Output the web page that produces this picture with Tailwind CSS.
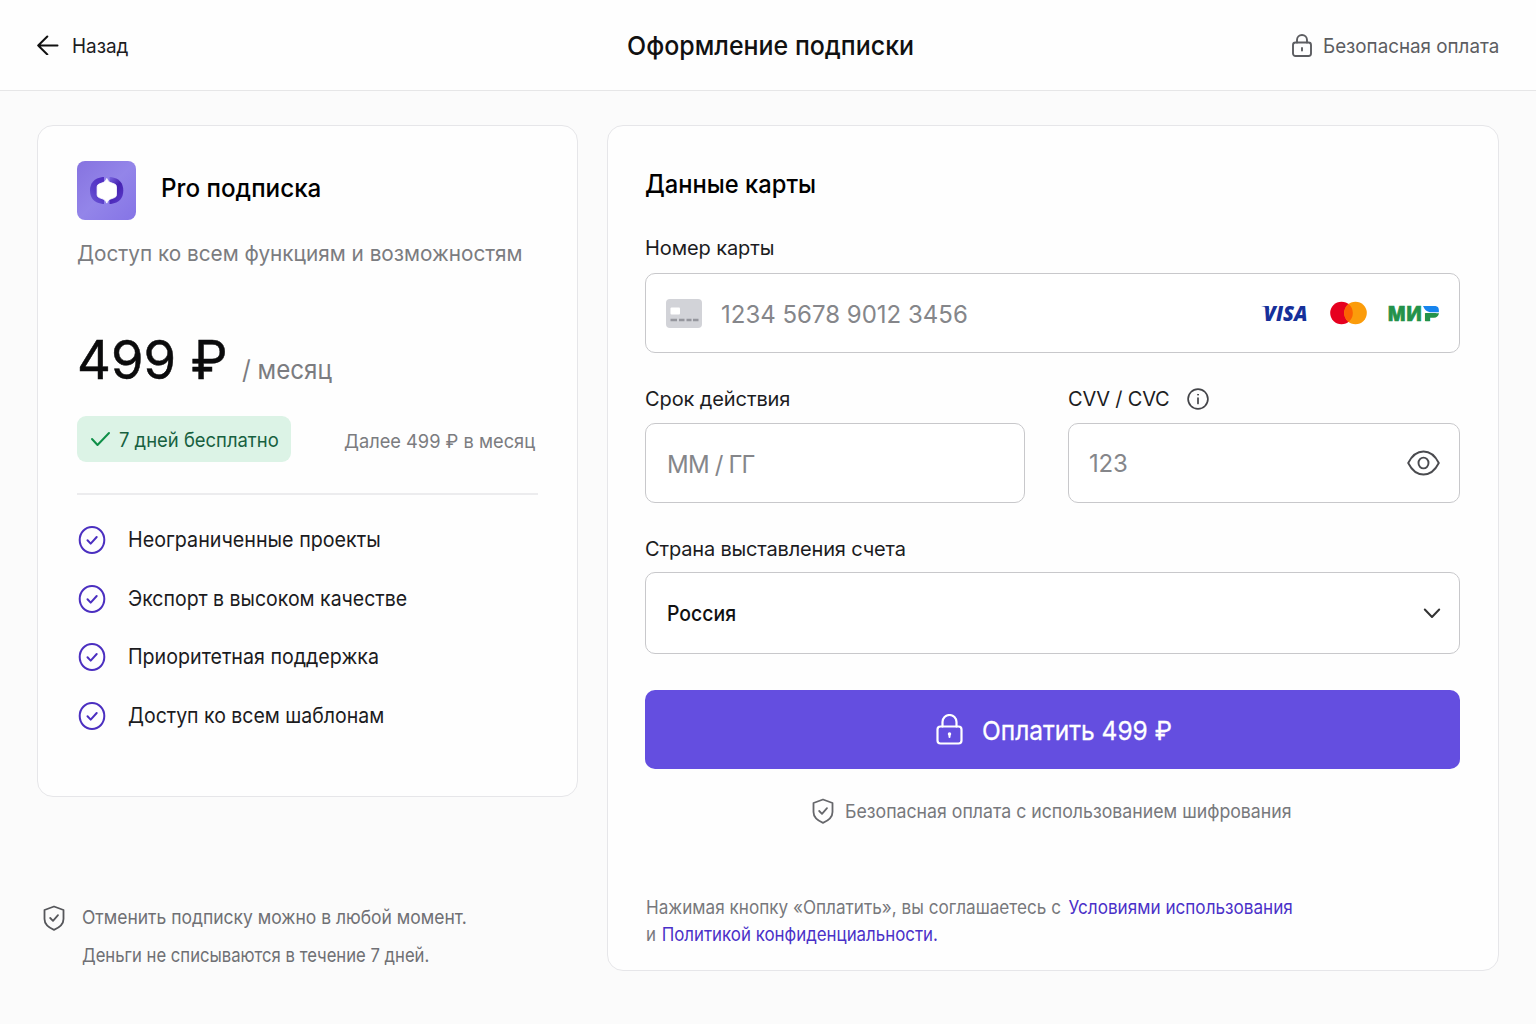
<!DOCTYPE html>
<html lang="ru">

<head>
    <meta charset="UTF-8">
    <meta name="viewport" content="width=device-width, initial-scale=1.0">
    <script src="https://cdn.jsdelivr.net/npm/@tailwindcss/browser@4"></script>
    <title>Оформление подписки</title>
</head>

<body class="bg-[#fbfbfb] font-['Inter','Liberation_Sans',sans-serif] text-[#1c1c1e] h-[1024px] overflow-hidden whitespace-nowrap">
    <header class="grid grid-cols-3 items-center h-[91px] px-[37px] bg-[#fefefe] border-b border-[#e6e6e7]">
        <a href="#" class="flex items-center gap-[13px] text-[20px]">
            <svg class="w-[22px] h-[20px]" viewBox="0 0 22 20" fill="none" stroke="#111" stroke-width="2" stroke-linecap="round" stroke-linejoin="round"><path d="M20.500 10.500H1.200M10.300 1.500 1.200 10.500l9.100 9"/></svg>
            <span class="pt-px origin-left scale-x-[.945]">Назад</span>
        </a>
        <h1 class="pt-px pl-[6px] text-center text-[26px] font-medium text-[#111] scale-x-[.96]">Оформление подписки</h1>
        <div class="flex items-center justify-end gap-[11px] text-[20px] text-[#5c5d61]">
            <svg class="w-5 h-[23px]" viewBox="0 0 20 23" fill="none" stroke="currentColor" stroke-width="1.900" stroke-linecap="round"><rect x="1" y="8.500" width="18" height="13.500" rx="2.500"/><path d="M5 8.500V6a5 5 0 0 1 10 0v2.500M10 14v2.500"/></svg>
            <span class="w-[176px] pt-px origin-left scale-x-[.939]">Безопасная оплата</span>
        </div>
    </header>

    <main class="flex items-start gap-[29px] pt-[34px] pl-[37px] pr-[37px]">
        <div class="w-[541px]">
            <!-- План -->
            <section class="h-[672px] px-[39px] pt-[35px] bg-[#fefefe] border border-[#e6e6e9] rounded-2xl">
                <div class="flex items-center gap-[25px]">
                    <svg class="w-[59px] h-[59px]" viewBox="0 0 59 59">
                        <defs>
                            <linearGradient id="tile" x1="0" y1="0" x2="1" y2="1"><stop offset="0" stop-color="#8673e0"/><stop offset=".5" stop-color="#9385e9"/><stop offset="1" stop-color="#8574e6"/></linearGradient>
                            <linearGradient id="left" x1="0" y1="1" x2=".6" y2="0"><stop offset="0" stop-color="#6f5ad8"/><stop offset=".5" stop-color="#5a3fca"/><stop offset="1" stop-color="#5230c4"/></linearGradient>
                            <linearGradient id="right" x1="0" y1="0" x2=".6" y2="1"><stop offset="0" stop-color="#7a66e0"/><stop offset=".5" stop-color="#4521b0"/><stop offset="1" stop-color="#5737c6"/></linearGradient>
                        </defs>
                        <rect width="59" height="59" rx="8" fill="url(#tile)"/>
                        <path d="M27 16h-1.500Q13 18 13 29.500T25.500 43H27z" fill="url(#left)"/>
                        <path d="M32.500 16H34q12.300 2 12.300 13.500T34 43h-1.500z" fill="url(#right)"/>
                        <path d="M29.800 17.500c.9 2.200 2.200 3.600 3.900 4.100l3.800 1.400q2 .8 2 2.800v8q0 2-2 2.800l-3.800 1.400c-1.700.5-3 1.900-3.900 4.100-.9-2.200-2.200-3.600-3.900-4.100l-3.800-1.400q-2-.8-2-2.800v-8q0-2 2-2.800l3.800-1.400c1.700-.5 3-1.900 3.900-4.100z" fill="#fff" stroke="#fff" stroke-width=".8" stroke-linejoin="round"/>
                    </svg>
                    <h2 class="pb-1 text-[25.5px] font-medium text-black origin-left scale-x-[.95]">Pro подписка</h2>
                </div>
                <p class="mt-[17px] text-[22px] leading-8 text-[#7b7c80] origin-left scale-x-[.943]">Доступ ко всем функциям и возможностям</p>
                <div class="flex items-baseline gap-[18px] mt-[56px] h-[71px]">
                    <span class="w-[147px] text-[53px] leading-[70px] font-normal text-[#0b0b0c] [-webkit-text-stroke:.5px_#0b0b0c] origin-left scale-x-[.99]">499 ₽</span>
                    <span class="text-[26px] leading-[30px] text-[#7b7c80] origin-left scale-x-[.93]">/ месяц</span>
                </div>
                <div class="flex items-center justify-between mt-[20px] pr-[3px]">
                    <span class="flex items-center gap-2 w-[214px] h-[46px] pl-[13px] bg-[#dcf3e6] rounded-[9px] text-[19.500px] text-[#17603f]">
                        <svg class="w-[21px] h-[16px] shrink-0" viewBox="0 0 21 16" fill="none" stroke="#0f8f48" stroke-width="2" stroke-linecap="round" stroke-linejoin="round"><path d="m2 8 5.500 6L19 2"/></svg>
                        <span class="pt-[3px] origin-left scale-x-[.945]">7 дней бесплатно</span>
                    </span>
                    <span class="w-[191px] pt-[6px] text-[19px] text-[#7b7c80] origin-left scale-x-[.96]">Далее 499 ₽ в месяц</span>
                </div>
                <ul class="flex flex-col mt-[31px] pt-[16px] border-t-2 border-[#ececee] text-[21.3px]">
                    <li class="flex items-center gap-[22px] h-[58.5px]">
                        <svg class="w-[28px] h-[28px] ml-px" viewBox="0 0 28 28" fill="none" stroke="#4b2fc0" stroke-width="2" stroke-linecap="round" stroke-linejoin="round"><ellipse cx="14" cy="14" rx="12.300" ry="13"/><path d="m9.500 14.300 3.200 3.300 6-6.600"/></svg>
                        <span class="origin-left scale-x-[.925]">Неограниченные проекты</span>
                    </li>
                    <li class="flex items-center gap-[22px] h-[58.5px]">
                        <svg class="w-[28px] h-[28px] ml-px" viewBox="0 0 28 28" fill="none" stroke="#4b2fc0" stroke-width="2" stroke-linecap="round" stroke-linejoin="round"><ellipse cx="14" cy="14" rx="12.300" ry="13"/><path d="m9.500 14.300 3.200 3.300 6-6.600"/></svg>
                        <span class="origin-left scale-x-[.915]">Экспорт в высоком качестве</span>
                    </li>
                    <li class="flex items-center gap-[22px] h-[58.5px]">
                        <svg class="w-[28px] h-[28px] ml-px" viewBox="0 0 28 28" fill="none" stroke="#4b2fc0" stroke-width="2" stroke-linecap="round" stroke-linejoin="round"><ellipse cx="14" cy="14" rx="12.300" ry="13"/><path d="m9.500 14.300 3.200 3.300 6-6.600"/></svg>
                        <span class="origin-left scale-x-[.922]">Приоритетная поддержка</span>
                    </li>
                    <li class="flex items-center gap-[22px] h-[58.5px]">
                        <svg class="w-[28px] h-[28px] ml-px" viewBox="0 0 28 28" fill="none" stroke="#4b2fc0" stroke-width="2" stroke-linecap="round" stroke-linejoin="round"><ellipse cx="14" cy="14" rx="12.300" ry="13"/><path d="m9.500 14.300 3.200 3.300 6-6.600"/></svg>
                        <span class="origin-left scale-x-[.915]">Доступ ко всем шаблонам</span>
                    </li>
                </ul>
            </section>

            <div class="flex gap-[17px] mt-[102px] pl-[6px] text-[19px] leading-[37.5px] text-[#6f7074]">
                <svg class="w-[22px] h-[26px] mt-[6px]" viewBox="0 0 22 26" fill="none" stroke="#55565a" stroke-width="1.800" stroke-linecap="round" stroke-linejoin="round"><path d="M11 1.500 20.500 5v9c0 5-4 8.500-9.500 10.800C5.500 22.500 1.500 19 1.500 14V5z"/><path d="m7.200 13 2.800 2.800 5-5.600"/></svg>
                <div>
                    <p class="origin-left scale-x-[.92]">Отменить подписку можно в любой момент.</p>
                    <p class="origin-left scale-x-[.877]">Деньги не списываются в течение 7 дней.</p>
                </div>
            </div>
        </div>

        <!-- Оплата -->
        <form class="flex-1 min-w-0 h-[846px] pl-[37px] pr-[38px] bg-[#fefefe] border border-[#e6e6e9] rounded-2xl">
            <h2 class="mt-[41px] text-[25.5px] leading-[34px] font-medium text-black origin-left scale-x-[.93]">Данные карты</h2>
            <label class="block mt-[34px] h-[27px] text-[20px] leading-[27px] tracking-[-0.1px]">Номер карты</label>
            <div class="flex items-center mt-[11px] h-[80px] px-[20px] bg-white border border-[#c8c8cb] rounded-[10px]">
                <svg class="w-[36px] h-[29px]" viewBox="0 0 36 29"><rect width="36" height="29" rx="4" fill="#d2d3d8"/><rect x="4.500" y="8.500" width="9.500" height="7" rx="1" fill="#fff"/><path d="M4.500 21h6.500M13 21h5.500M20.500 21h5M27 21h5.500" stroke="#95969d" stroke-width="2.600"/></svg>
                <input class="flex-1 ml-[19px] pt-[3px] min-w-0 text-[24px] outline-none placeholder:text-[#85868a]" placeholder="1234 5678 9012 3456">
                <svg class="w-[182px] h-[40px] shrink-0" viewBox="-1 -7.5 182 40">
                    <text x="5.500" y="20.300" font-family="Open Sans" font-weight="800" font-style="italic" font-size="20.500" fill="#16309a" textLength="44" lengthAdjust="spacingAndGlyphs">VISA</text>
                    <path d="M3 5.700h7l1.500 4C9.500 7.200 6 6.200 3 5.700z" fill="#16309a"/>
                    <circle cx="83.500" cy="12.500" r="11.300" fill="#e6001f"/><circle cx="97.500" cy="12.500" r="11.300" fill="#fb9c0b"/>
                    <path d="M90.500 3.600a11.300 11.300 0 0 1 0 17.800a11.300 11.300 0 0 1 0-17.800z" fill="#fb6203"/>
                    <text y="20.300" font-family="Open Sans" font-weight="800" font-size="20.500" fill="#23924a" stroke="#23924a" stroke-width=".7"><tspan x="129.500" textLength="34.500" lengthAdjust="spacingAndGlyphs">МИ</tspan><tspan x="166">Р</tspan></text>
                    <path d="M165.500 4.500h17v8h-17z" fill="#fff"/>
                    <path d="M167 12.800H181q-1 4.400-5 4.400h-4v3.400h-5z" fill="#23924a"/>
                    <path d="M165 5.600h12.500q4 .5 3.300 6.200H172q-4.500-.5-7-6.200z" fill="#1684ee"/>
                </svg>
            </div>
            <div class="flex gap-[43px] mt-[32px]">
                <div class="w-[380px] shrink-0">
                    <label class="block h-[27px] text-[20px] leading-[28px] tracking-[-0.1px]">Срок действия</label>
                    <input class="block w-full mt-[11px] h-[80px] px-[21px] pt-[2px] bg-white border border-[#c8c8cb] rounded-[10px] text-[24px] tracking-[-0.8px] outline-none placeholder:text-[#85868a]" placeholder="ММ / ГГ">
                </div>
                <div class="flex-1 min-w-0">
                    <label class="flex items-center gap-[17px] h-[27px] text-[20px] leading-[28px] tracking-[-0.2px]">
                        CVV / CVC
                        <svg class="w-[22px] h-[22px]" viewBox="0 0 22 22" fill="none" stroke="#444549" stroke-width="1.700" stroke-linecap="round"><circle cx="11" cy="11" r="9.900"/><path d="M11 10v5.500"/><circle cx="11" cy="6.700" r=".5" fill="#444549" stroke-width="1"/></svg>
                    </label>
                    <div class="flex items-center mt-[11px] h-[80px] px-[19px] bg-white border border-[#c8c8cb] rounded-[10px]">
                        <input class="flex-1 pt-[2px] pl-px min-w-0 text-[24px] tracking-[-0.2px] outline-none placeholder:text-[#85868a]" placeholder="123">
                        <svg class="w-[33px] h-[26px]" viewBox="0 0 33 26" fill="none" stroke="#4a4b4f" stroke-width="1.900" stroke-linejoin="round"><path d="M1.200 13C5 5.500 10 1.500 16.500 1.500S28 5.500 31.800 13C28 20.500 23 24.500 16.500 24.500S5 20.500 1.200 13z"/><ellipse cx="16.500" cy="13" rx="5" ry="5.400"/></svg>
                    </div>
                </div>
            </div>
            <label class="block mt-[33px] h-[27px] text-[20px] leading-[27px] tracking-[-0.17px]">Страна выставления счета</label>
            <div class="flex items-center justify-between mt-[9px] h-[82px] pl-[21px] pr-[18px] bg-white border border-[#c8c8cb] rounded-[10px] text-[21px] font-medium text-[#111]">
                <span class="pt-px origin-left scale-x-[.925]">Россия</span>
                <svg class="w-[18px] h-[11px]" viewBox="0 0 18 11" fill="none" stroke="#333" stroke-width="2" stroke-linecap="round" stroke-linejoin="round"><path d="m1.800 1.500 7.200 7.500 7.200-7.500"/></svg>
            </div>
            <button type="button" class="flex items-center justify-center gap-[19px] w-full h-[79px] mt-[36px] pl-[3px] rounded-[10px] bg-[#644ee0] text-white text-[26px]">
                <svg class="w-[27px] h-[31px]" viewBox="0 0 27 31" fill="none" stroke="#fff" stroke-width="2.200" stroke-linecap="round"><rect x="1.500" y="12.500" width="24" height="17" rx="3"/><path d="M6.500 12.500V8a7 7 0 0 1 14 0v4.500"/><circle cx="13.500" cy="20" r="1" fill="#fff" stroke-width="1.500"/><path d="M13.500 20v3" stroke-width="2"/></svg>
                <span class="w-[190px] pt-px text-left [-webkit-text-stroke:.3px_#fff] origin-left scale-x-[.942]">Оплатить 499 ₽</span>
            </button>
            <div class="flex items-center justify-center gap-[11px] h-[30px] mt-[27px] pr-px text-[19px] text-[#77787c]">
                <svg class="w-[22px] h-[26px]" viewBox="0 0 22 26" fill="none" stroke="#66676b" stroke-width="1.800" stroke-linecap="round" stroke-linejoin="round"><path d="M11 1.500 20.500 5v9c0 5-4 8.500-9.500 10.800C5.500 22.500 1.500 19 1.500 14V5z"/><path d="m7.200 13 2.800 2.800 5-5.600"/></svg>
                <span class="w-[447px] pt-[2px] origin-left scale-x-[.932]">Безопасная оплата с использованием шифрования</span>
            </div>
            <div class="mt-[68px] pl-px text-[18.5px] leading-[26.5px] text-[#77787c]">
                <p class="origin-left scale-x-[.926]">Нажимая кнопку «Оплатить», вы соглашаетесь с <a href="#" class="ml-[3px] text-[#4a30c8]">Условиями использования</a></p>
                <p class="origin-left scale-x-[.912]">и <a href="#" class="ml-px text-[#4a30c8]">Политикой конфиденциальности.</a></p>
            </div>
        </form>
    </main>
</body>

</html>
